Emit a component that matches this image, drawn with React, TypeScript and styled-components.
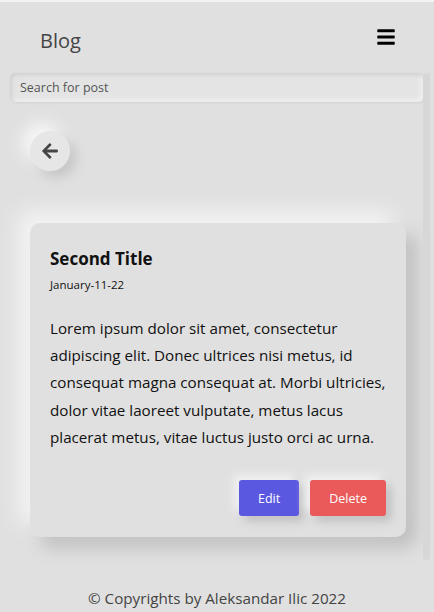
import React from "react";
import styled, { createGlobalStyle } from "styled-components";
import { FaBars, FaArrowLeft } from "react-icons/fa";

const Global = createGlobalStyle`
  html, body { margin: 0; padding: 0; }
  body {
    background: #e0e0e0;
    font-family: "Open Sans", "Noto Sans", sans-serif;
    color: #111;
    width: 434px;
    height: 612px;
    overflow: hidden;
  }
  * { box-sizing: border-box; }
`;

const Page = styled.div`
  height: 612px;
  display: flex;
  flex-direction: column;
  border-top: 2px solid #f2f2f2;
`;

const Header = styled.header`
  height: 71px;
  display: flex;
  align-items: center;
  justify-content: space-between;
  padding: 6px 38px 0 40px;
`;

const Logo = styled.div`
  font-size: 20px;
  color: #444;
`;

const MenuButton = styled.button`
  border: none;
  background: transparent;
  padding: 0;
  display: flex;
  color: #000;
  margin-top: -8px;
`;

const ScrollArea = styled.div`
  margin: 0 4px 0 10px;
  height: 487px;
  display: flex;
`;

const ScrollContent = styled.div`
  flex: 1;
  min-width: 0;
`;

const ScrollTrack = styled.div`
  width: 7px;
  display: flex;
  flex-direction: column;
  background: #dfdfdf;
`;

const ScrollThumb = styled.div`
  flex: 1;
  border-radius: 4px;
  background: #d7d7d7;
`;

const Search = styled.input`
  display: block;
  width: 100%;
  height: 29px;
  border: none;
  outline: none;
  border-radius: 5px;
  background: #e4e4e4;
  padding: 0 10px;
  font-family: "Open Sans", "Noto Sans", sans-serif;
  font-size: 12.5px;
  color: #555;
  box-shadow: inset 2px 2px 4px #cfcfcf, inset -2px -2px 4px #f4f4f4, 1px 1px 3px #d0d0d0;
  &::placeholder { color: #555; }
`;

const BackButton = styled.button`
  margin: 29px 0 0 20px;
  width: 40px;
  height: 40px;
  border-radius: 50%;
  border: none;
  background: #e6e6e6;
  color: #444;
  display: flex;
  align-items: center;
  justify-content: center;
  box-shadow: -8px -8px 16px #f7f7f7, 6px 6px 12px #c4c4c4;
`;

const Card = styled.article`
  margin: 52px 17px 0 20px;
  padding: 24px 20px 21px 20px;
  border-radius: 10px;
  background: #e0e0e0;
  box-shadow: -12px -12px 20px #f3f3f3, 10px 10px 18px #bdbdbd;
`;

const Title = styled.h2`
  margin: 0;
  font-size: 17px;
  font-weight: 700;
  line-height: 24px;
  color: #111;
`;

const DateText = styled.div`
  margin-top: 6px;
  font-size: 11.5px;
  line-height: 16px;
  color: #111;
`;

const Body = styled.p`
  margin: 22px 0 0 0;
  font-size: 15.2px;
  line-height: 27.2px;
  color: #111;
`;

const Actions = styled.div`
  display: flex;
  justify-content: flex-end;
  gap: 11px;
  margin-top: 29px;
`;

const ActionButton = styled.button<{ $tone: "edit" | "delete" }>`
  height: 36px;
  padding: 0 19px;
  border: none;
  border-radius: 3px;
  color: #fff;
  font-family: "Open Sans", "Noto Sans", sans-serif;
  font-size: 12.5px;
  background: ${(p) => (p.$tone === "edit" ? "#5a57e1" : "#ea5a5b")};
  box-shadow: -5px -5px 10px #f2f2f2, 5px 5px 10px #bdbdbd;
`;

const Footer = styled.footer`
  flex: 1;
  display: flex;
  align-items: center;
  justify-content: center;
  padding-top: 23px;
  font-size: 15.2px;
  color: #444;
`;

export default function App() {
  return (
    <>
      <Global />
      <Page>
        <Header>
          <Logo>Blog</Logo>
          <MenuButton aria-label="menu">
            <FaBars size={20} />
          </MenuButton>
        </Header>
        <ScrollArea>
          <ScrollContent>
            <Search placeholder="Search for post" />
            <BackButton aria-label="back">
              <FaArrowLeft size={18} />
            </BackButton>
            <Card>
              <Title>Second Title</Title>
              <DateText>January-11-22</DateText>
              <Body>
                Lorem ipsum dolor sit amet, consectetur adipiscing elit. Donec ultrices nisi metus, id
                consequat magna consequat at. Morbi ultricies, dolor vitae laoreet vulputate, metus lacus
                placerat metus, vitae luctus justo orci ac urna.
              </Body>
              <Actions>
                <ActionButton $tone="edit">Edit</ActionButton>
                <ActionButton $tone="delete">Delete</ActionButton>
              </Actions>
            </Card>
          </ScrollContent>
          <ScrollTrack aria-hidden="true">
            <ScrollThumb />
          </ScrollTrack>
        </ScrollArea>
        <Footer>© Copyrights by Aleksandar Ilic 2022</Footer>
      </Page>
    </>
  );
}
